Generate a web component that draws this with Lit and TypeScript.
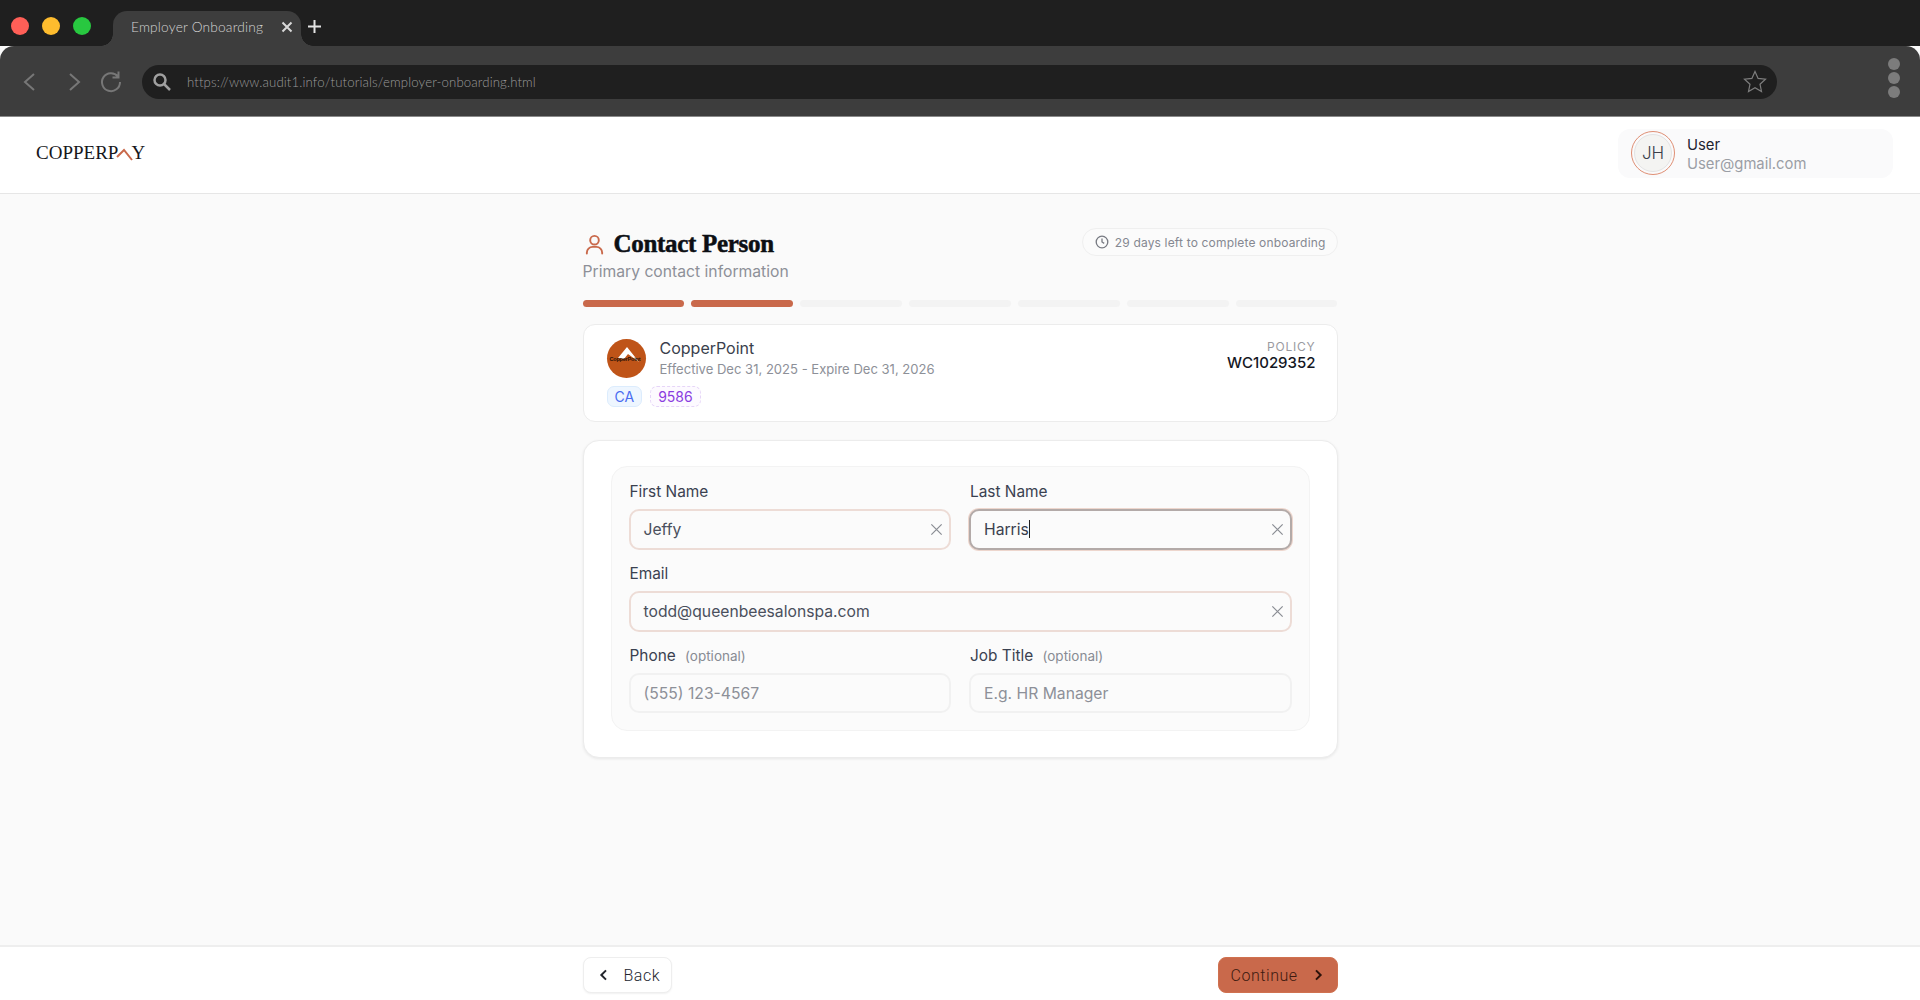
import { LitElement, html, css, svg } from "lit";
import { customElement } from "lit/decorators.js";

const chevL = svg`<path d="M15 5l-7 7 7 7"/>`;
const chevR = svg`<path d="M9 5l7 7-7 7"/>`;

@customElement("app-root")
export class AppRoot extends LitElement {
  static styles = css`
    :host { display: flex; flex-direction: column; width: 100%; height: 100vh; overflow: hidden; background: #fafafa; font-family: Inter, "Liberation Sans", sans-serif; color: #2f3542; }
    * { box-sizing: border-box; }
    svg { display: block; flex: none; }
    .tabbar { height: 46px; flex: none; background: #1f1f1f; display: flex; align-items: flex-end; padding-left: 11px; }
    .dots { display: flex; gap: 13px; align-self: flex-start; margin-top: 17px; }
    .dot { width: 18px; height: 18px; border-radius: 50%; }
    .tab { position: relative; margin-left: 22px; width: 188px; height: 35px; background: #3d3d3d; border-radius: 14px 14px 0 0; color: #d4d4d4; font-family: Lato, sans-serif; font-size: 13.7px; font-weight: 300; letter-spacing: .2px; display: flex; align-items: center; padding: 0 8px 4px 18px; justify-content: space-between; }
    .tab::before, .tab::after { content: ""; position: absolute; bottom: 0; width: 12px; height: 12px; }
    .tab::before { left: -12px; background: radial-gradient(circle at 0 0, #1f1f1f 11.5px, #3d3d3d 12px); }
    .tab::after { right: -12px; background: radial-gradient(circle at 100% 0, #1f1f1f 11.5px, #3d3d3d 12px); }
    .plus { margin: 7px 0 0 7px; align-self: center; }
    .toolbar { height: 71px; flex: none; background: #3d3d3d; border-radius: 14px 14px 0 0; border-bottom: 1px solid #8a8a8a; display: flex; align-items: center; padding: 1px 20px 0 20px; position: relative; }
    .navs { display: flex; align-items: center; width: 122px; color: #777; }
    .urlbar { flex: none; width: 1635px; height: 34px; background: #1f1f1f; border-radius: 17px; display: flex; align-items: center; padding: 0 10px 0 10px; color: #9a9a9a; font-family: Lato, sans-serif; font-size: 13.2px; font-weight: 300; }
    .urltext { margin-left: 15px; flex: 1; letter-spacing: .13px; }
    .menu { margin-left: auto; display: flex; flex-direction: column; gap: 2px; margin-top: -7px; }
    .menu i { display: block; width: 12px; height: 12px; border-radius: 50%; background: #7c7c7c; }
    .header { height: 77px; flex: none; background: #fff; border-bottom: 1px solid #e6e6e6; display: flex; align-items: center; justify-content: space-between; padding: 0 27px 0 36px; }
    .logo { display: flex; align-items: center; font-family: "Liberation Serif", serif; font-size: 19px; color: #17171b; position: relative; margin-top: -5px; }
    .logo .mark { margin: 2px -4px 0 -3px; }
    .user { width: 275px; height: 49px; background: #fafafb; border-radius: 12px; display: flex; align-items: center; padding-left: 13px; gap: 12px; margin-top: -3px; }
    .avatar { width: 44px; height: 44px; border-radius: 50%; border: 1.5px solid #df8f74; padding: 2px; margin-top: -1px; }
    .avatar div { width: 100%; height: 100%; border-radius: 50%; background: #f4f4f2; border: 1px solid #e4e4e4; display: flex; align-items: center; justify-content: center; font-size: 17px; font-weight: 300; color: #3b3f4a; }
    .uinfo { margin-top: 2px; }
    .uname { font-size: 14.8px; line-height: 18.5px; color: #1f2430; }
    .umail { font-size: 14.8px; line-height: 18.5px; color: #9b9ea5; }
    main { flex: 1; min-height: 0; display: flex; justify-content: center; }
    .col { width: 755px; padding-top: 34px; }
    .top { display: flex; justify-content: space-between; align-items: flex-start; height: 71px; }
    .titlerow { display: flex; align-items: center; gap: 8px; height: 32px; color: #c9694b; }
    h1 { margin: 0; font-family: "Liberation Serif", serif; font-size: 25px; font-weight: 700; color: #0c0f14; letter-spacing: -.3px; -webkit-text-stroke: .5px #0c0f14; }
    .sub { font-size: 15.7px; color: #8d9098; margin-top: 2px; }
    .pill { height: 28px; border: 1px solid #efefef; border-radius: 14px; background: #fbfbfb; display: flex; align-items: center; gap: 6px; padding: 0 11px 0 12px; font-size: 12px; color: #858891; letter-spacing: .17px; }
    .bars { display: grid; grid-template-columns: repeat(7, 1fr); gap: 7px; margin-top: 1px; }
    .bars i { height: 7px; border-radius: 4px; background: #f3f3f3; display: block; }
    .bars i.on { background: #c9694b; }
    .policy { height: 98px; margin-top: 17px; background: #fff; border: 1.5px solid #ececec; border-radius: 12px; padding: 13px 21px 0 23px; display: flex; justify-content: space-between; }
    .pl { display: flex; flex-direction: column; }
    .co { display: flex; gap: 14px; align-items: center; }
    .clogo { width: 39px; height: 39px; border-radius: 50%; background: #bf5418; position: relative; overflow: hidden; }
    .clogo span { position: absolute; left: 3px; top: 17px; font-family: "Liberation Sans", sans-serif; font-size: 5.5px; font-weight: 700; color: #2a1206; white-space: nowrap; letter-spacing: -.2px; }
    .clogo svg { position: absolute; left: 0; top: 0; }
    .cname { font-size: 16px; line-height: 21px; color: #3a3f4d; }
    .cdate { font-size: 13.05px; line-height: 20px; color: #8d9098; }
    .tags { display: flex; gap: 8px; margin-top: 7px; }
    .tag { height: 21px; border-radius: 7px; display: flex; align-items: center; padding: 0 7px; font-size: 14px; }
    .tag.a { background: #eef6ff; border: 1px solid #dcecfd; color: #4a6cf0; padding: 0 7px; font-size: 14px; }
    .tag.b { background: #fdfaff; border: 1px dashed #e6d5f8; color: #8b3ddf; }
    .pr { text-align: right; margin-top: 2px; }
    .pk { font-size: 12px; line-height: 14px; letter-spacing: .8px; color: #9a9a9f; }
    .pv { font-size: 15px; line-height: 18px; font-weight: 500; color: #14171f; }
    .form { height: 318px; margin-top: 18px; background: #fff; border: 1.5px solid #ececec; border-radius: 16px; box-shadow: 0 1px 3px rgba(0,0,0,.08); padding: 25px 27px 0 27px; }
    .inner { height: 265px; background: #fbfbfb; border: 1px solid #f3f3f3; border-radius: 16px; padding: 15px 17px 0 17px; display: grid; grid-template-columns: 1fr 1fr; column-gap: 18px; grid-auto-rows: 82px; align-content: start; }
    .field.full { grid-column: 1 / 3; }
    label { display: block; height: 19px; line-height: 19px; font-size: 15.4px; color: #3a4150; margin-bottom: 8px; margin-left: 1px; }
    label small { font-size: 13.5px; color: #888b93; margin-left: 5px; }
    .input { height: 41px; border-radius: 10px; border: 2px solid #eddcd6; background: #fbfbfb; display: flex; align-items: center; justify-content: space-between; padding: 0 5px 0 13px; font-size: 15.7px; color: #4a4f5c; }
    .input.focus { border-color: #b3aaa8; box-shadow: 0 0 0 1px #edd6cd; color: #3a3f4d; }
    .input.empty { height: 40px; border: 2px solid #f1f1f1; color: #8d9098; margin-top: 2px; }
    .caret { display: inline-block; width: 1px; height: 18px; background: #222; vertical-align: -3px; }
    .input svg { color: #8a8d94; }
    footer { height: 55px; flex: none; background: #fff; border-top: 2px solid #eeeeee; display: flex; justify-content: center; padding-top: 10px; }
    .frow { width: 755px; display: flex; justify-content: space-between; align-items: flex-start; }
    .btn { height: 36px; border-radius: 8px; display: flex; align-items: center; font-family: Roboto, sans-serif; font-size: 16px; font-weight: 300; letter-spacing: .55px; }
    .back { width: 89px; background: #fff; border: 1.5px solid #eeeeee; box-shadow: 0 1px 2px rgba(0,0,0,.06); color: #22262f; padding-left: 12px; gap: 12px; }
    .cont { width: 120px; background: #c9694b; border: 1px solid #d0714f; color: #3d1a10; padding-left: 12px; gap: 12px; }
  `;

  x(size = 15) {
    return html`<svg width=${size} height=${size} viewBox="0 0 16 16" fill="none" stroke="currentColor" stroke-width="1.3"><path d="M2.5 2.5l11 11M13.5 2.5l-11 11"/></svg>`;
  }

  render() {
    return html`
      <div class="tabbar">
        <div class="dots">
          <div class="dot" style="background:#ff5f57"></div>
          <div class="dot" style="background:#febc2e"></div>
          <div class="dot" style="background:#28c840"></div>
        </div>
        <div class="tab"><span>Employer Onboarding</span>
          <svg width="12" height="12" viewBox="0 0 12 12" fill="none" stroke="#d8d8d8" stroke-width="2"><path d="M1.5 1.5l9 9M10.500 1.500l-9 9"/></svg>
        </div>
        <svg class="plus" width="13" height="13" viewBox="0 0 13 13" fill="none" stroke="#e4e4e4" stroke-width="2"><path d="M6.500 0v13M0 6.500h13"/></svg>
      </div>
      <div class="toolbar">
        <div class="navs">
          <svg width="20" height="24" viewBox="0 0 20 24" fill="none" stroke="currentColor" stroke-width="2"><path d="M14 4L5 12l9 8"/></svg>
          <svg style="margin-left:24px" width="20" height="24" viewBox="0 0 20 24" fill="none" stroke="currentColor" stroke-width="2"><path d="M6 4l9 8-9 8"/></svg>
          <svg style="margin-left:15px" width="24" height="24" viewBox="0 0 24 24" fill="none" stroke="currentColor" stroke-width="2"><path d="M19 6.500A9 9 0 1 0 21 12M19.500 1.500v6h-6"/></svg>
        </div>
        <div class="urlbar">
          <svg width="20" height="20" viewBox="0 0 20 20" fill="none" stroke="#a0a0a0" stroke-width="2.500"><circle cx="8" cy="8" r="5.500"/><path d="M12 12l6 6"/></svg>
          <span class="urltext">https://www.audit1.info/tutorials/employer-onboarding.html</span>
          <svg width="24" height="24" viewBox="0 0 24 24" fill="none" stroke="#7e7e7e" stroke-width="1.200"><path d="M12 1.500l3.100 6.900 7.400.8-5.500 5 1.500 7.300L12 17.800l-6.500 3.700L7 14.200l-5.500-5 7.400-.8z"/></svg>
        </div>
        <div class="menu"><i></i><i></i><i></i></div>
      </div>
      <div class="header">
        <div class="logo">COPPERP<svg class="mark" width="20" height="17" viewBox="0 0 20 17" fill="none" stroke="#c9694b" stroke-width="2"><path d="M2 12l7-7 8 10"/></svg>Y</div>
        <div class="user">
          <div class="avatar"><div>JH</div></div>
          <div class="uinfo"><div class="uname">User</div><div class="umail">User@gmail.com</div></div>
        </div>
      </div>
      <main>
        <div class="col">
          <div class="top">
            <div>
              <div class="titlerow">
                <svg width="23" height="23" viewBox="0 0 24 24" fill="none" stroke="currentColor" stroke-width="2" stroke-linecap="round"><circle cx="12" cy="7.500" r="4.500"/><path d="M4 21.500v-1a6 6 0 0 1 6-6h4a6 6 0 0 1 6 6v1"/></svg>
                <h1>Contact Person</h1>
              </div>
              <div class="sub">Primary contact information</div>
            </div>
            <div class="pill">
              <svg width="14" height="14" viewBox="0 0 14 14" fill="none" stroke="#777a82" stroke-width="1.300"><circle cx="7" cy="7" r="5.800"/><path d="M7 3.600V7l2.200 1.400"/></svg>
              29 days left to complete onboarding
            </div>
          </div>
          <div class="bars"><i class="on"></i><i class="on"></i><i></i><i></i><i></i><i></i><i></i></div>
          <div class="policy">
            <div class="pl">
              <div class="co">
                <div class="clogo">
                  <svg width="39" height="39" viewBox="0 0 39 39"><path fill="#fff" d="M11 19L20 8l12 15-11-8-4 5z"/></svg>
                  <span>CopperPoint</span>
                </div>
                <div><div class="cname">CopperPoint</div><div class="cdate">Effective Dec 31, 2025 - Expire Dec 31, 2026</div></div>
              </div>
              <div class="tags"><div class="tag a">CA</div><div class="tag b">9586</div></div>
            </div>
            <div class="pr"><div class="pk">POLICY</div><div class="pv">WC1029352</div></div>
          </div>
          <div class="form">
            <div class="inner">
              <div class="field"><label>First Name</label><div class="input"><span>Jeffy</span>${this.x()}</div></div>
              <div class="field"><label>Last Name</label><div class="input focus"><span>Harris<span class="caret"></span></span>${this.x()}</div></div>
              <div class="field full"><label>Email</label><div class="input"><span>todd@queenbeesalonspa.com</span>${this.x()}</div></div>
              <div class="field"><label>Phone <small>(optional)</small></label><div class="input empty">(555) 123-4567</div></div>
              <div class="field"><label>Job Title <small>(optional)</small></label><div class="input empty">E.g. HR Manager</div></div>
            </div>
          </div>
        </div>
      </main>
      <footer>
        <div class="frow">
          <div class="btn back"><svg width="16" height="16" viewBox="0 0 24 24" fill="none" stroke="#22252c" stroke-width="3">${chevL}</svg>Back</div>
          <div class="btn cont">Continue<svg width="16" height="16" viewBox="0 0 24 24" fill="none" stroke="#2c120a" stroke-width="3">${chevR}</svg></div>
        </div>
      </footer>
    `;
  }
}
